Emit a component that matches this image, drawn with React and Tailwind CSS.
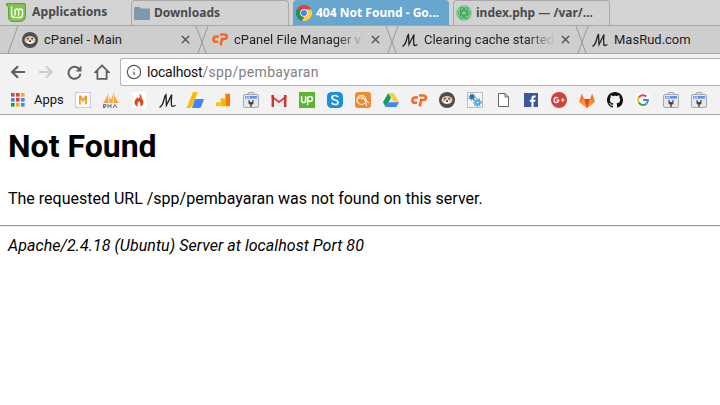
import { Info, X } from "lucide-react";

const Chrome = ({ size = 16 }) => (
  <svg width={size} height={size} viewBox="0 0 16 16" className="shrink-0">
    <circle cx="8" cy="8" r="8" fill="#db4437" />
    <path d="M8 8 L1.1 4 A8 8 0 0 0 6 15.8 Z" fill="#0f9d58" />
    <path d="M8 4.5 H15.2 A8 8 0 0 1 6 15.8 L9.5 10 Z" fill="#ffcd40" />
    <circle cx="8" cy="8" r="3.8" fill="#fff" />
    <circle cx="8" cy="8" r="3" fill="#4285f4" />
  </svg>
);

const Folder = () => (
  <svg width="16" height="14" viewBox="0 0 16 14" className="shrink-0">
    <path d="M0 2 Q0 1 1 1 H6 L7 2.5 H15 Q16 2.5 16 3.5 V13 Q16 14 15 14 H1 Q0 14 0 13 Z" fill="#7d98ad" />
  </svg>
);

const Atom = () => (
  <svg width="16" height="16" viewBox="0 0 16 16" className="shrink-0">
    <circle cx="8" cy="8" r="8" fill="#7ccf8e" />
    <g fill="none" stroke="#3f9a5b" strokeWidth="0.9">
      <ellipse cx="8" cy="8" rx="6" ry="2.4" />
      <ellipse cx="8" cy="8" rx="6" ry="2.4" transform="rotate(60 8 8)" />
      <ellipse cx="8" cy="8" rx="6" ry="2.4" transform="rotate(120 8 8)" />
    </g>
  </svg>
);

const Mint = () => (
  <svg width="20" height="19" viewBox="0 0 20 19" className="shrink-0">
    <path d="M0.5 0.5 H18 Q19.5 0.5 19.5 2 V12 Q19.5 18.5 13.5 18.5 H7 Q2.5 18.5 2.5 13.5 V4.5 Q2.5 3 0.5 2.5 Z" fill="#7ec44f" stroke="#5c9e38" />
    <path d="M5.6 3.5 V11.5 Q5.6 14.5 8.5 14.5 H13.5 Q16.5 14.5 16.5 11.5 V8.5 Q16.5 6 14.4 6 Q12.6 6 12.6 8 V12.5 M12.6 8 Q12.6 6 10.8 6 Q9 6 9 8 V12.5" fill="none" stroke="#fff" strokeWidth="1.4" />
  </svg>
);

const Marmot = ({ size = 16 }) => (
  <svg width={size} height={size} viewBox="0 0 16 16" className="shrink-0">
    <circle cx="8" cy="8" r="8" fill="#4e4e4e" />
    <ellipse cx="8" cy="8" rx="5.5" ry="4" fill="#e3c9ad" />
    <circle cx="5.8" cy="6.6" r="0.9" fill="#333" />
    <circle cx="10.2" cy="6.6" r="0.9" fill="#333" />
    <path d="M4 10 Q8 7.4 12 10 Q8 13 4 10 Z" fill="#fff" />
    <path d="M7 8.5 H9 V10 H7 Z" fill="#333" />
  </svg>
);

const CPanel = () => (
  <svg width="16" height="13" viewBox="0 0 16 13" className="shrink-0">
    <g fill="none" stroke="#f4692a" strokeWidth="2.5">
      <path d="M7 3.6 H4.4 Q1.4 3.6 1.4 6.4 Q1.4 8.8 4 8.8 H6.2" />
      <path d="M8 1.5 H12.4 Q14.8 1.5 14.8 3.7 Q14.8 6 12.2 6 H10.2 M10.4 4.5 L8.6 12.4" />
    </g>
  </svg>
);

// hand written M of masrud.com
const MasRud = ({ size = 16 }) => (
  <svg width={size} height={size} viewBox="0 0 16 16" className="shrink-0">
    <path d="M0.5 14.5 Q3.5 13 5 6 Q5.6 3 6.5 2.5 L7 12.5 L12 2.5 Q11.3 9 11.8 12.5 Q12.2 14.5 15.5 12.5" fill="none" stroke="#222" strokeWidth="1.3" />
  </svg>
);

const BackIcon = ({ color, flip }) => (
  <svg width="16" height="14" viewBox="0 0 16 14" className={"shrink-0 " + (flip ? "rotate-180" : "")}>
    <path d="M15 7 H2.5 M8 1.2 L2.2 7 L8 12.8" fill="none" stroke={color} strokeWidth="2.2" />
  </svg>
);

const ReloadIcon = () => (
  <svg width="15" height="15" viewBox="0 0 15 15" className="shrink-0">
    <path d="M12.2 4 A6 6 0 1 0 13.5 8.6" fill="none" stroke="#5f5f5f" strokeWidth="2" />
    <path d="M14.5 0.6 V6.4 H8.7 Z" fill="#5f5f5f" />
  </svg>
);

const HomeIcon = () => (
  <svg width="16" height="16" viewBox="0 0 16 16" className="shrink-0">
    <path d="M8 1.4 L14.6 8 H12.6 V14.8 H3.4 V8 H1.4 Z" fill="none" stroke="#5f5f5f" strokeWidth="1.8" />
  </svg>
);

const Divider = () => (
  <svg width="14" height="28" viewBox="0 0 14 28" className="shrink-0">
    <path d="M1 0 L11 27" stroke="#9a9a9a" fill="none" />
    <path d="M3 27 L13 0" stroke="#9a9a9a" fill="none" />
  </svg>
);

const FirstSlant = () => (
  <svg width="14" height="28" viewBox="0 0 14 28" className="shrink-0">
    <path d="M3 27 L13 0" stroke="#9a9a9a" fill="none" />
  </svg>
);

const ChromeTab = ({ icon, title, fade, close = true }) => (
  <div className="flex w-[176px] shrink-0 items-center pl-[3px] pr-[3px]">
    {icon}
    <span
      className={
        "ml-[6px] min-w-0 flex-1 overflow-hidden whitespace-nowrap text-[13px] text-[#222] " +
        (fade ? "[mask-image:linear-gradient(to_right,#000_78%,transparent_100%)]" : "")
      }
    >
      {title}
    </span>
    {close && <X size={13} strokeWidth={2.6} className="ml-[4px] shrink-0 text-[#555]" />}
  </div>
);

const WindowButton = ({ icon, title, active, width }) => (
  <div
    className={
      "flex h-[25px] items-center gap-[3px] rounded-t-[4px] border border-b-0 pl-[2px] pb-[1px] text-[12px] font-bold whitespace-nowrap " +
      (active ? "border-[#6aa5cb] bg-[#66a6cf] text-white" : "border-[#a9a9a9] bg-[#d2d2d2] text-[#4a4a4a]")
    }
    style={{ width }}
  >
    {icon}
    <span className="ml-[1px]">{title}</span>
  </div>
);

const ToolbarBtn = ({ children }) => <div className="flex w-[28px] justify-center">{children}</div>;

const AppsGrid = () => (
  <svg width="14" height="14" viewBox="0 0 14 14" className="shrink-0">
    {[
      ["#db4437", "#db4437", "#f4b400"],
      ["#4285f4", "#db4437", "#4285f4"],
      ["#0f9d58", "#f4b400", "#4285f4"],
    ].map((row, r) =>
      row.map((c, i) => <rect key={r + "-" + i} x={i * 5} y={r * 5} width="3.6" height="3.6" fill={c} />)
    )}
  </svg>
);

const Marks = ({ size = 16 }) => (
  <svg width={size} height={size} viewBox="0 0 18 18">
    <rect x="0.5" y="0.5" width="17" height="17" fill="#fff" stroke="#c4cfe0" strokeWidth="1.4" />
    <path d="M4.5 14 V4 H6.5 L9 8 L11.5 4 H13.5 V14 H11.5 V8 L9 11.5 L6.5 8 V14 Z" fill="#f59b1f" />
  </svg>
);

const Pma = () => (
  <svg width="18" height="18" viewBox="0 0 18 18">
    <path d="M1 12 Q4 9 6 2 Q7 7 9 9 Q10 5 12 1 Q13 8 17 12 Z" fill="#f7a33c" />
    <path d="M6 3 L7 12 M12 2 L11 12" stroke="#fff" strokeWidth="0.8" />
    <path d="M1 13 H17 V17 H1 Z" fill="#f2f2f2" />
    <path d="M1.5 17 V13.5 H4 V15.4 H2.5 V17 M6 17 V13.5 L7.5 15.5 L9 13.5 V17 M11 17 L13 13.5 L15 17" fill="none" stroke="#555f7b" strokeWidth="0.9" />
  </svg>
);

const CodeIgniter = () => (
  <svg width="16" height="16" viewBox="0 0 16 18">
    <rect width="16" height="18" fill="#fff" />
    <path d="M8 1 Q10 5 8 7 Q7 8 6.5 5.5 Q3 8.5 3 12 Q3 15 7 16.5 Q5 13.5 8 10.5 Q11 13.5 9 16.5 Q13 15 13 11.5 Q13 9 11 7 Q11.5 4 8 1 Z" fill="#dd4814" />
  </svg>
);

const Adwords = () => (
  <svg width="18" height="16" viewBox="0 0 18 16">
    <path d="M7 0 H12 L6 14 Q5 16 3 16 H0.5 Z" fill="#fbbc04" />
    <path d="M9 7 H18 L15.5 14 Q15 16 13 16 H6 Z" fill="#4285f4" />
  </svg>
);

const Analytics = () => (
  <svg width="14" height="14" viewBox="0 0 18 16">
    <rect x="12" y="0" width="6" height="16" rx="1" fill="#f57c00" />
    <rect x="6" y="6" width="6" height="10" fill="#ffb300" />
    <rect x="0" y="11" width="6" height="5" rx="1" fill="#ffc107" />
  </svg>
);

const WebTools = () => (
  <svg width="16" height="16" viewBox="0 0 16 16">
    <path d="M5 2.5 V1.4 Q5 0.6 6 0.6 H10 Q11 0.6 11 1.4 V2.5" fill="none" stroke="#9c9c9c" />
    <rect x="0.5" y="2.5" width="15" height="13" rx="1.5" fill="#e8e8e8" stroke="#a8a8a8" />
    <rect x="2" y="4" width="12" height="2.6" fill="#5c94f0" />
    <rect x="3" y="4.7" width="1.4" height="1.1" fill="#fff" />
    <rect x="5.4" y="4.7" width="1.4" height="1.1" fill="#fff" />
    <path d="M5.5 8 V11 Q5.5 12.5 7.3 12.5 V15 H8.7 V12.5 Q10.5 12.5 10.5 11 V8 H9.3 V10 H6.7 V8 Z" fill="#444" />
  </svg>
);

const Gmail = () => (
  <svg width="16" height="13" viewBox="0 0 16 14">
    <path d="M0 1 H16 V14 H0 Z" fill="#ececec" />
    <path d="M0 1 L8 7.5 L16 1 V3.8 L8 10 L0 3.8 Z" fill="#d6473b" />
    <path d="M0 1 H2.6 V14 H0 Z M13.4 1 H16 V14 H13.4 Z" fill="#c5392e" />
  </svg>
);

const Upwork = () => (
  <svg width="16" height="16" viewBox="0 0 16 16">
    <rect width="16" height="16" fill="#5bb62e" />
    <path d="M2.6 4 V8.2 Q2.6 10.6 4.6 10.6 Q6.6 10.6 6.6 8.2 V4 M8.6 13 V4.8 M8.6 6 Q9.5 4.5 11 4.5 Q13.4 4.5 13.4 7 Q13.4 9.4 11 9.4 Q9.6 9.4 8.6 8" fill="none" stroke="#fff" strokeWidth="1.5" />
  </svg>
);

const Skype = () => (
  <svg width="16" height="16" viewBox="0 0 16 16">
    <rect width="16" height="16" rx="4.5" fill="#1d8fdc" />
    <path d="M11.2 5 Q10 3.5 8 3.5 Q5 3.5 5 5.6 Q5 7.4 8 8 Q11 8.6 11 10.4 Q11 12.5 8 12.5 Q5.6 12.5 4.6 10.8" fill="none" stroke="#fff" strokeWidth="1.7" />
  </svg>
);

const Basket = () => (
  <svg width="16" height="16" viewBox="0 0 16 16">
    <rect width="16" height="16" rx="3" fill="#ef8b2c" />
    <circle cx="6.5" cy="8" r="4.5" fill="none" stroke="#fff" strokeWidth="1.1" />
    <path d="M3 6 Q8 5 14 11 M5 3.5 Q11 6 11.5 14" fill="none" stroke="#fff" strokeWidth="1" />
  </svg>
);

const Drive = () => (
  <svg width="16" height="14" viewBox="0 0 16 14">
    <path d="M5.3 0 L0 9.3 L2.7 14 L8 4.7 Z" fill="#0f9d58" />
    <path d="M5.3 0 H10.7 L16 9.3 H10.7 Z" fill="#ffcd40" />
    <path d="M2.7 14 L5.3 9.3 H16 L13.3 14 Z" fill="#4285f4" />
  </svg>
);

const Gears = () => (
  <svg width="16" height="16" viewBox="0 0 16 16">
    <rect x="0.5" y="0.5" width="15" height="15" fill="#f6f6f6" stroke="#bdbdbd" />
    <circle cx="5" cy="5" r="2.4" fill="#2c74a8" />
    <circle cx="5" cy="5" r="3" fill="none" stroke="#2c74a8" strokeWidth="1.2" strokeDasharray="1.2 1.2" />
    <circle cx="10.5" cy="10.5" r="3" fill="#45a6dd" />
    <circle cx="10.5" cy="10.5" r="3.7" fill="none" stroke="#45a6dd" strokeWidth="1.4" strokeDasharray="1.4 1.2" />
    <circle cx="10.5" cy="10.5" r="1.1" fill="#f6f6f6" />
  </svg>
);

const Doc = () => (
  <svg width="11" height="14" viewBox="0 0 11 14">
    <path d="M0.5 0.5 H7 L10.5 4 V13.5 H0.5 Z M7 0.5 V4 H10.5" fill="#fff" stroke="#666" />
  </svg>
);

const Facebook = () => (
  <svg width="14" height="14" viewBox="0 0 15 15">
    <rect width="15" height="15" fill="#3b5998" />
    <path d="M10.2 15 V9.4 H12 L12.3 7.2 H10.2 V5.8 Q10.2 4.8 11.2 4.8 H12.4 V2.8 Q11.6 2.7 10.7 2.7 Q8 2.7 8 5.5 V7.2 H6.2 V9.4 H8 V15 Z" fill="#fff" />
  </svg>
);

const GPlus = () => (
  <svg width="16" height="16" viewBox="0 0 16 16">
    <circle cx="8" cy="8" r="8" fill="#d2413a" />
    <path d="M8.4 7.6 H5.4 V8.8 H7 Q6.7 10 5.4 10 Q3.8 10 3.8 8 Q3.8 6 5.4 6 Q6.1 6 6.6 6.5 L7.5 5.6 Q6.6 4.8 5.4 4.8 Q2.5 4.8 2.5 8 Q2.5 11.2 5.4 11.2 Q8.4 11.2 8.4 7.6 Z" fill="#fff" />
    <path d="M10 8 H13.4 M11.7 6.3 V9.7" stroke="#fff" strokeWidth="1.1" />
  </svg>
);

const GitLab = () => (
  <svg width="16" height="15" viewBox="0 0 16 15">
    <path d="M8 15 L0.2 9 L2.8 0.5 L5 6 H11 L13.2 0.5 L15.8 9 Z" fill="#fc6d26" />
    <path d="M8 15 L5 6 H11 Z" fill="#e24329" />
    <path d="M8 15 L0.2 9 L5 6 Z M8 15 L15.8 9 L11 6 Z" fill="#fca326" opacity="0.75" />
  </svg>
);

const GitHub = () => (
  <svg width="16" height="16" viewBox="0 0 16 16">
    <path
      fill="#111"
      d="M8 0C3.58 0 0 3.58 0 8c0 3.54 2.29 6.53 5.47 7.59.4.07.55-.17.55-.38 0-.19-.01-.82-.01-1.49-2.01.37-2.53-.49-2.69-.94-.09-.23-.48-.94-.82-1.13-.28-.15-.68-.52-.01-.53.63-.01 1.08.58 1.23.82.72 1.21 1.87.87 2.33.66.07-.52.28-.87.51-1.07-1.78-.2-3.64-.89-3.64-3.95 0-.87.31-1.59.82-2.15-.08-.2-.36-1.02.08-2.12 0 0 .67-.21 2.2.82.64-.18 1.32-.27 2-.27s1.36.09 2 .27c1.53-1.04 2.2-.82 2.2-.82.44 1.1.16 1.92.08 2.12.51.56.82 1.27.82 2.15 0 3.07-1.87 3.75-3.65 3.95.29.25.54.73.54 1.48 0 1.07-.01 1.93-.01 2.2 0 .21.15.46.55.38A8.01 8.01 0 0 0 16 8c0-4.42-3.58-8-8-8Z"
    />
  </svg>
);

const Google = () => (
  <svg width="16" height="16" viewBox="0 0 16 16">
    <circle cx="8" cy="8" r="8" fill="#fff" />
    <g fill="none" strokeWidth="2">
      <path d="M11.3 4.4 A5 5 0 0 0 3.7 5.6" stroke="#ea4335" />
      <path d="M3.7 5.6 A5 5 0 0 0 3.7 10.4" stroke="#fbbc05" />
      <path d="M3.7 10.4 A5 5 0 0 0 11.4 11.7" stroke="#34a853" />
      <path d="M11.4 11.7 A5 5 0 0 0 13 8 H8" stroke="#4285f4" />
    </g>
  </svg>
);

const bookmarks = [
  <Marks />, <Pma />, <CodeIgniter />, <MasRud size={17} />, <Adwords />, <Analytics />, <WebTools />, <Gmail />,
  <Upwork />, <Skype />, <Basket />, <Drive />, <CPanel />, <Marmot />, <Gears />, <Doc />, <Facebook />, <GPlus />,
  <GitLab />, <GitHub />, <Google />, <WebTools />, <WebTools />,
];

export default function App() {
  return (
    <div className="h-[405px] w-[720px] overflow-hidden bg-white font-['Roboto',sans-serif]">
      {/* desktop panel */}
      <div className="flex h-[25px] items-end bg-[#d3d3d3] font-['Noto_Sans',sans-serif]">
        <div className="flex h-[25px] w-[131px] items-center pl-[6px]">
          <Mint />
          <span className="ml-[6px] text-[12.2px] font-bold text-[#4a4a4a]">Applications</span>
        </div>
        <div className="flex gap-[4px]">
          <WindowButton icon={<Folder />} title="Downloads" width={158} />
          <WindowButton icon={<Chrome />} title="404 Not Found - Go..." active width={156} />
          <WindowButton icon={<Atom />} title="index.php — /var/..." width={157} />
        </div>
      </div>

      {/* browser tabs */}
      <div className="flex h-[29px] overflow-hidden border-y border-[#a6a6a6] bg-[#cecece] pl-[5px]">
        <FirstSlant />
        <ChromeTab icon={<Marmot />} title="cPanel - Main" />
        <Divider />
        <ChromeTab icon={<CPanel />} title="cPanel File Manager v3" fade />
        <Divider />
        <ChromeTab icon={<MasRud />} title="Clearing cache started" fade />
        <Divider />
        <ChromeTab icon={<MasRud />} title="MasRud.com" close={false} />
      </div>

      {/* toolbar */}
      <div className="flex h-[32px] items-start bg-[#f2f2f2] pl-[4px]">
        <div className="flex h-[32px] items-center pt-[4px]">
          <ToolbarBtn><BackIcon color="#5f5f5f" /></ToolbarBtn>
          <ToolbarBtn><BackIcon color="#cccccc" flip /></ToolbarBtn>
          <ToolbarBtn><ReloadIcon /></ToolbarBtn>
          <ToolbarBtn><HomeIcon /></ToolbarBtn>
        </div>
        <div className="mt-[4px] ml-[4px] flex h-[28px] flex-1 items-center rounded-l-[3px] border border-r-0 border-[#b4b4b4] bg-white pl-[5px] text-[14px]">
          <Info size={16} strokeWidth={1.8} className="text-[#5a5a5a]" />
          <span className="ml-[5px] tracking-[-0.2px] text-[#111]">localhost</span>
          <span className="tracking-[0.33px] text-[#808080]">/spp/pembayaran</span>
        </div>
      </div>

      {/* bookmarks */}
      <div className="flex h-[29px] items-center border-b border-[#a8a8a8] bg-[#f2f2f2] pl-[11px]">
        <AppsGrid />
        <span className="ml-[9px] w-[32px] text-[13px] text-[#111]">Apps</span>
        <div className="ml-[3px] flex">
          {bookmarks.map((b, i) => (
            <div key={i} className="flex h-[18px] w-[28px] items-center justify-center">{b}</div>
          ))}
        </div>
      </div>

      {/* page */}
      <div className="px-[8px] text-black">
        <h1 className="mt-[13px] text-[32px] leading-[37px] font-bold">Not Found</h1>
        <p className="mt-[24px] text-[16px] leading-[19px]">The requested URL /spp/pembayaran was not found on this server.</p>
        <hr className="-mx-[8px] mt-[17px] border-t border-b border-t-[#999] border-b-[#eee]" />
        <p className="mt-[9px] text-[16px] leading-[19px] tracking-[0.06px] italic">Apache/2.4.18 (Ubuntu) Server at localhost Port 80</p>
      </div>
    </div>
  );
}
